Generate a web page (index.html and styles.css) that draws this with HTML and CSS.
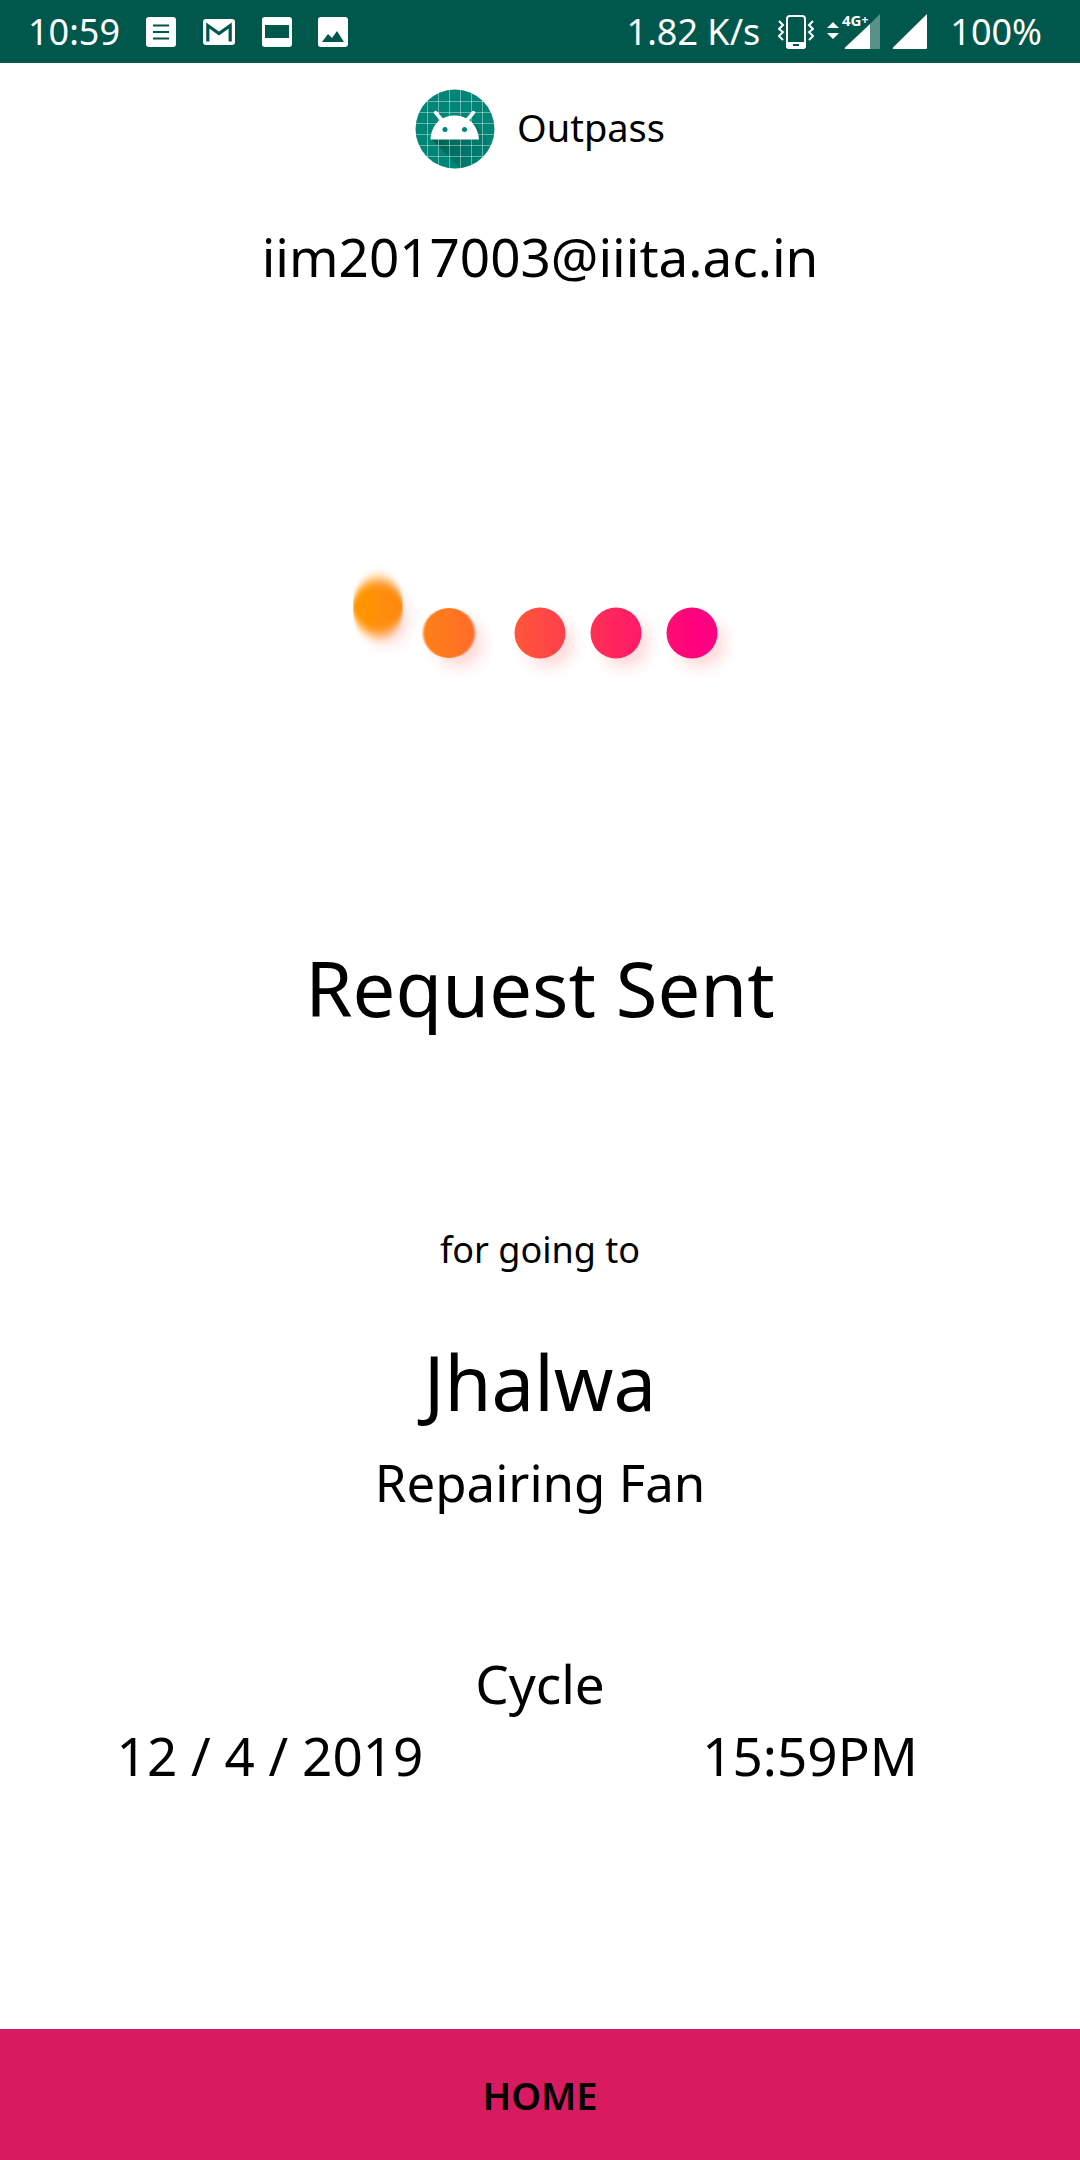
FILE: index.html
```html
<!DOCTYPE html>
<html lang="en">
<head>
<meta charset="utf-8">
<meta name="viewport" content="width=device-width, initial-scale=1">
<title>Outpass</title>
<link rel="stylesheet" href="styles.css">
</head>
<body>
<div class="status-bar">
  <div class="status-group notifications">
    <span class="clock">10:59</span>
    <svg width="30" height="30" viewBox="0 0 30 30" aria-hidden="true"><rect width="30" height="30" rx="3" fill="#fff"/><path d="M7 8.500h16M7 15h16M7 21.500h16" stroke="#00574b" stroke-width="2"/></svg>
    <svg width="34" height="30" viewBox="0 0 34 30" aria-hidden="true"><rect x="1" y="2" width="32" height="26" rx="3" fill="#fff"/><path d="M5.800 24.500V8.500L17 16.500l11.200-8v16" fill="none" stroke="#00574b" stroke-width="3.200"/></svg>
    <svg width="30" height="30" viewBox="0 0 30 30" aria-hidden="true"><rect width="30" height="30" rx="3" fill="#fff"/><path d="M3 8h24v13H3z" fill="#00574b"/></svg>
    <svg width="30" height="30" viewBox="0 0 30 30" aria-hidden="true"><rect width="30" height="30" rx="3" fill="#fff"/><path d="M4 25l6-8 4 4 5-7 7 11z" fill="#00574b"/></svg>
  </div>
  <div class="status-group indicators">
    <span class="speed">1.82 K/s</span>
    <svg width="36" height="36" viewBox="0 0 36 36" fill="none" stroke="#fff" aria-hidden="true"><rect x="9" y="2" width="18" height="32" rx="3" stroke-width="2"/><path d="M8 28h20v4q0 3-3 3H11q-3 0-3-3z" fill="#fff" stroke="none"/><path d="M15 31h6" stroke="#00574b" stroke-width="2"/><path d="M1 7l4 4-4 4 4 3-4 4 4 4M35 7l-4 4 4 4-4 3 4 4-4 4" stroke-width="2"/></svg>
    <svg width="54" height="48" viewBox="0 -6 54 48" aria-hidden="true"><path d="M1 14l6-6 6 6zM1 19l6 6 6-6z" fill="#fff"/><path d="M44 10L54 0v34q0 1-1 1h-9z" fill="#fff" opacity=".35"/><path d="M44 10v25H20q-2 0-1-1.500z" fill="#fff"/><text class="network" x="16" y="12">4G<tspan class="network-plus" dy="-2">+</tspan></text></svg>
    <svg width="36" height="36" viewBox="0 0 36 36" aria-hidden="true"><path d="M35 0v34q0 1-1 1H2q-2 0-1-1.500z" fill="#fff"/></svg>
    <span class="battery">100%</span>
  </div>
</div>

<main class="screen">
  <header class="brand">
    <svg width="80" height="80" viewBox="0 0 80 80" aria-hidden="true">
      <defs>
        <clipPath id="disc"><circle cx="40" cy="40" r="39.500"/></clipPath>
        <linearGradient id="fade" x1="24" y1="50" x2="62" y2="76" gradientUnits="userSpaceOnUse"><stop offset="0" stop-color="#00574b" stop-opacity=".75"/><stop offset="1" stop-color="#00574b" stop-opacity=".1"/></linearGradient>
      </defs>
      <g clip-path="url(#disc)">
        <path d="M0 0h80v80H0z" fill="#008577"/>
        <path d="M16 50L60 34l30 42v28H70z" fill="url(#fade)"/>
        <path d="M12.500 0v80M23.500 0v80M34.500 0v80M45.500 0v80M56.500 0v80M67.500 0v80M0 12.500h80M0 23.500h80M0 34.500h80M0 45.500h80M0 56.500h80M0 67.500h80" stroke="#fff" stroke-opacity=".4"/>
      </g>
      <path d="M20.500 23.500l6 7M58.500 23.500l-6 7" stroke="#fff" stroke-width="3.500" stroke-linecap="round"/>
      <path d="M15.500 50.500C16 36 26 26.500 39.500 26.500S63 36 64 50.500z" fill="#fff"/>
      <circle cx="30" cy="40.500" r="2.500" fill="#008577"/><circle cx="49.500" cy="40.500" r="2.500" fill="#008577"/>
    </svg>
    <h1 class="brand-name">Outpass</h1>
  </header>

  <p class="body-text account">iim2017003@iiita.ac.in</p>

  <svg class="progress" width="420" height="150" viewBox="0 0 420 150" role="img" aria-label="Waiting for approval">
    <defs>
      <linearGradient id="warm" x1="22" y1="0" x2="388" y2="0" gradientUnits="userSpaceOnUse"><stop offset="0" stop-color="#ff9800"/><stop offset=".28" stop-color="#ff7522"/><stop offset=".5" stop-color="#ff4d40"/><stop offset=".72" stop-color="#ff245f"/><stop offset=".95" stop-color="#ff0080"/></linearGradient>
      <filter id="shadow" x="-50%" y="-50%" width="200%" height="200%"><feGaussianBlur stdDeviation="7"/></filter>
      <filter id="bounce" x="-20%" y="-40%" width="140%" height="180%"><feGaussianBlur stdDeviation="0 6"/></filter>
      <filter id="slide" x="-20%" y="-20%" width="140%" height="140%"><feGaussianBlur stdDeviation="1 0"/></filter>
    </defs>
    <g fill="#f44336" fill-opacity=".2" filter="url(#shadow)"><ellipse cx="57" cy="68" rx="21" ry="26"/><circle cx="129" cy="93" r="24"/><circle cx="219" cy="93" r="24"/><circle cx="295" cy="93" r="24"/><circle cx="371" cy="93" r="24"/></g>
    <g fill="url(#warm)"><ellipse cx="48" cy="57" rx="25" ry="28" filter="url(#bounce)"/><ellipse cx="119" cy="83" rx="26" ry="25" filter="url(#slide)"/><circle cx="210" cy="83" r="25.500"/><circle cx="286" cy="83" r="25.500"/><circle cx="362" cy="83" r="25.500"/></g>
  </svg>

  <h2 class="display-text state">Request Sent</h2>
  <p class="small-text purpose">for going to</p>
  <p class="display-text place">Jhalwa</p>
  <p class="body-text reason">Repairing Fan</p>
  <p class="body-text transport">Cycle</p>
  <div class="body-text schedule">
    <span>12 / 4 / 2019</span>
    <span>15:59PM</span>
  </div>
</main>

<button class="home-button" type="button">HOME</button>
</body>
</html>
```
FILE: styles.css
```css
* {
  box-sizing: border-box;
}

body {
  display: flex;
  flex-direction: column;
  min-height: 100vh;
  margin: 0;
  background: #fff;
  color: #000;
  font-family: "Noto Sans", "Open Sans", sans-serif;
}

h1,
h2,
p {
  margin: 0;
  font-weight: 400;
}

svg {
  display: block;
  flex: none;
}

.status-bar {
  display: flex;
  justify-content: space-between;
  height: 63px;
  padding: 0 38px 0 28px;
  background: #00574b;
  color: #fff;
  font-size: 36px;
  line-height: 48px;
}

.status-group {
  display: flex;
  align-items: center;
  white-space: nowrap;
}

.notifications {
  gap: 26px;
}

.indicators {
  gap: 12px;
}

.speed {
  margin-right: 6px;
}

.battery {
  margin-left: 10px;
}

.network {
  fill: #fff;
  font-size: 15px;
  font-weight: 700;
}

.network-plus {
  font-size: 12px;
}

.screen {
  display: flex;
  flex: 1;
  flex-direction: column;
  align-items: center;
  padding: 26px 0 48px;
  text-align: center;
}

.brand {
  display: flex;
  align-items: center;
  gap: 22px;
}

.brand-name {
  padding-bottom: 4px;
  font-size: 38px;
  line-height: 48px;
}

.small-text {
  font-size: 36px;
  line-height: 48px;
}

.body-text {
  font-size: 53px;
  line-height: 72px;
}

.display-text {
  font-size: 76px;
  line-height: 104px;
}

.account {
  margin-top: 52px;
}

.progress {
  margin-top: 257px;
}

.state {
  margin-top: 236px;
}

.purpose {
  margin-top: 186px;
}

.place {
  margin-top: 56px;
}

.reason {
  margin-top: 12px;
  font-size: 51px;
}

.transport {
  margin-top: 130px;
}

.schedule {
  display: grid;
  grid-template-columns: 1fr 1fr;
  width: 100%;
}

.home-button {
  height: 131px;
  border: 0;
  background: #d81b60;
  color: #000;
  font-family: inherit;
  font-size: 38px;
  font-weight: 600;
}
```
